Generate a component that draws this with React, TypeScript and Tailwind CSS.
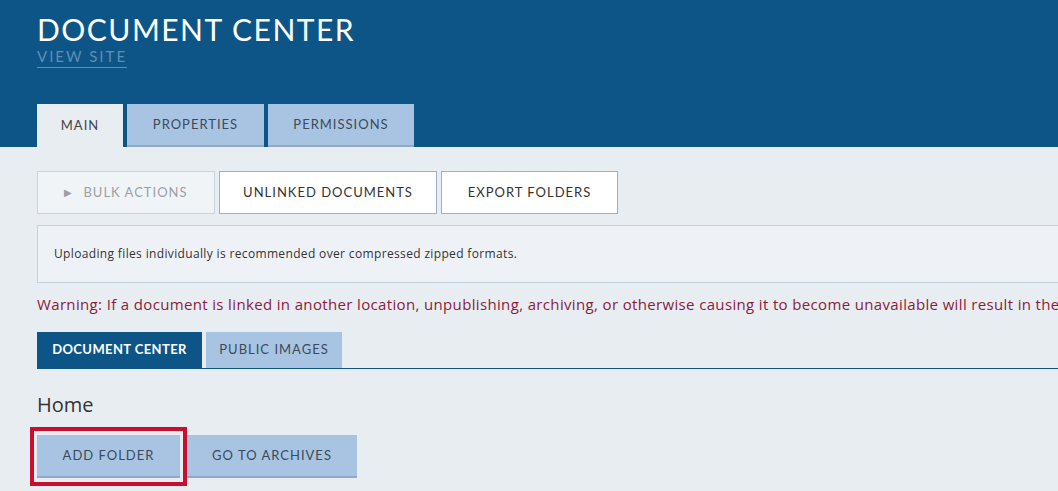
import React from "react";

const font = { fontFamily: "Lato, 'Open Sans', sans-serif" };
const prose = { fontFamily: "'Open Sans', Lato, sans-serif" };

function TopTab({ label, active }: { label: string; active?: boolean }) {
  return (
    <div
      className={
        active
          ? "h-[43px] flex items-center justify-center bg-[#e8edf2] text-[13px] tracking-[1px] text-[#444]"
          : "h-[43px] flex items-center justify-center bg-[#a8c4e2] border-b-2 border-[#8fa9c6] text-[13px] tracking-[1px] text-[#3c4a5a]"
      }
    >
      {label}
    </div>
  );
}

export default function App() {
  return (
    <div className="min-h-[491px] w-[1058px] overflow-hidden bg-[#e8edf2]" style={font}>
      {/* header */}
      <div className="bg-[#0d5587] h-[147px] pl-[37px] pt-[12px] flex flex-col">
        <h1 className="text-white text-[30px] leading-[34px] tracking-[1.5px]">DOCUMENT CENTER</h1>
        <a className="self-start mt-[1px] text-[#5e8db6] text-[15px] leading-[18px] tracking-[2px] border-b border-[#5e8db6] pb-[2px]">
          VIEW SITE
        </a>
        <div className="mt-auto flex gap-[4px]">
          <div className="w-[86px]"><TopTab label="MAIN" active /></div>
          <div className="w-[137px]"><TopTab label="PROPERTIES" /></div>
          <div className="w-[146px]"><TopTab label="PERMISSIONS" /></div>
        </div>
      </div>

      {/* body */}
      <div className="pl-[37px] pt-[24px]">
        <div className="flex gap-[4px]">
          <button className="w-[178px] h-[43px] bg-[#f1f4f7] border border-[#c9d3dd] text-[#9a9fa5] text-[13px] tracking-[1px] flex items-center justify-center gap-[10px]">
            <span className="text-[10px]">▶</span>
            BULK ACTIONS
          </button>
          <button className="w-[218px] h-[43px] bg-white border border-[#9fb0c2] text-[#333] text-[13px] tracking-[1px]">
            UNLINKED DOCUMENTS
          </button>
          <button className="w-[177px] h-[43px] bg-white border border-[#9fb0c2] text-[#333] text-[13px] tracking-[1px]">
            EXPORT FOLDERS
          </button>
        </div>

        <div
          className="mt-[11px] h-[58px] bg-[#eef2f7] border border-r-0 border-[#c5d1dd] flex items-center pl-[16px] text-[12px] tracking-[0.35px] text-[#333]"
          style={prose}
        >
          Uploading files individually is recommended over compressed zipped formats.
        </div>

        <p
          className="mt-[10px] text-[15px] leading-[22px] tracking-[0.35px] text-[#8a1c3a] whitespace-nowrap overflow-hidden"
          style={prose}
        >
          Warning: If a document is linked in another location, unpublishing, archiving, or otherwise causing it to become unavailable will result in the
        </p>

        <div className="mt-[17px] flex gap-[4px] border-b border-[#0d5587]">
          <div className="w-[165px] h-[36px] bg-[#0d5587] text-white text-[13px] font-bold tracking-[0.4px] flex items-center justify-center">
            DOCUMENT CENTER
          </div>
          <div className="w-[136px] h-[36px] bg-[#a8c4e2] text-[#3c4a5a] text-[13px] tracking-[1px] flex items-center justify-center">
            PUBLIC IMAGES
          </div>
        </div>

        <h2 className="mt-[24px] text-[20px] leading-[24px] text-[#333]" style={prose}>Home</h2>

        <div className="mt-[18px] flex gap-[7px]">
          <div className="relative">
            <button className="w-[143px] h-[43px] bg-[#a8c4e2] border-b-2 border-[#8fa9c6] text-[#3c4a5a] text-[13px] tracking-[1px]">
              ADD FOLDER
            </button>
            <div className="absolute -left-[7px] -top-[8px] w-[157px] h-[59px] border-[4px] border-[#c8102e] pointer-events-none" />
          </div>
          <button className="w-[170px] h-[43px] bg-[#a8c4e2] border-b-2 border-[#8fa9c6] text-[#3c4a5a] text-[13px] tracking-[1px]">
            GO TO ARCHIVES
          </button>
        </div>
      </div>
    </div>
  );
}
